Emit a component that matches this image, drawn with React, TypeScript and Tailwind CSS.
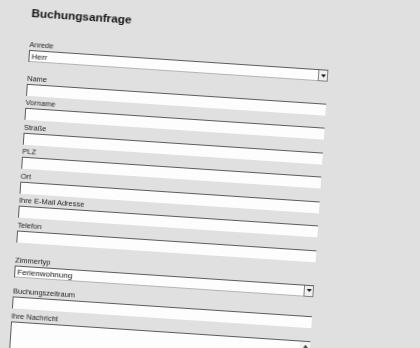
import React from 'react';

const FONT = { fontFamily: '"Liberation Sans", Arial, sans-serif' };

function Label({ text }: { text: string }) {
  return <div className="h-[9px] leading-[9px] text-[7.5px] text-[#1e1e1e] whitespace-nowrap">{text}</div>;
}

function TextField({ label, className }: { label: string; className: string }) {
  return (
    <div className={className}>
      <Label text={label} />
      <div className="mt-[1px] h-[12px] w-[300px] bg-[#fdfdfd] border-t border-l border-[#5c5c5c]" />
    </div>
  );
}

function SelectField({ label, value, className }: { label: string; value: string; className: string }) {
  return (
    <div className={className}>
      <Label text={label} />
      <div className="mt-[1px] h-[12px] w-[300px] bg-[#fdfdfd] border-t border-l border-[#5c5c5c] flex items-stretch">
        <div className="flex-1 border-b border-[#b5b5b5] pl-[2px] text-[8px] leading-[11px] text-[#111]">{value}</div>
        <div className="w-[10px] bg-[#efefef] border-r border-b border-l border-[#808080] flex items-center justify-center">
          <svg width="5" height="3" viewBox="0 0 5 3">
            <path d="M0 0 H5 L2.5 3 Z" fill="#111" />
          </svg>
        </div>
      </div>
    </div>
  );
}

export default function App() {
  return (
    <div className="w-[420px] h-[348px] overflow-hidden bg-[#e0e0e0] pl-[31.9px] pt-[5.6px]" style={FONT}>
      <div className="w-[310px] origin-top-left rotate-[3.8deg] blur-[0.35px]">
        <div className="h-[14px] leading-[14px] text-[11.8px] font-bold text-[#141414] whitespace-nowrap">Buchungsanfrage</div>

        <SelectField label="Anrede" value="Herr" className="mt-[20px]" />
        <TextField label="Name" className="mt-[11.5px]" />
        <TextField label="Vorname" className="mt-[2.5px]" />
        <TextField label="Straße" className="mt-[2.5px]" />
        <TextField label="PLZ" className="mt-[2.5px]" />
        <TextField label="Ort" className="mt-[2.5px]" />
        <TextField label="Ihre E-Mail Adresse" className="mt-[2.5px]" />
        <TextField label="Telefon" className="mt-[2.5px]" />

        <SelectField label="Zimmertyp" value="Ferienwohnung" className="mt-[13px]" />
        <TextField label="Buchungszeitraum" className="mt-[9.7px]" />

        <div className="mt-[3px]">
          <Label text="Ihre Nachricht" />
          <div className="mt-[1px] h-[60px] w-[300px] bg-[#fdfdfd] border-t border-l border-[#5c5c5c] flex justify-end">
            <div className="w-[10px] bg-[#f2f2f2] flex flex-col items-center pt-[3px]">
              <svg width="5" height="3" viewBox="0 0 5 3">
                <path d="M0 3 H5 L2.5 0 Z" fill="#444" />
              </svg>
            </div>
          </div>
        </div>
      </div>
    </div>
  );
}
